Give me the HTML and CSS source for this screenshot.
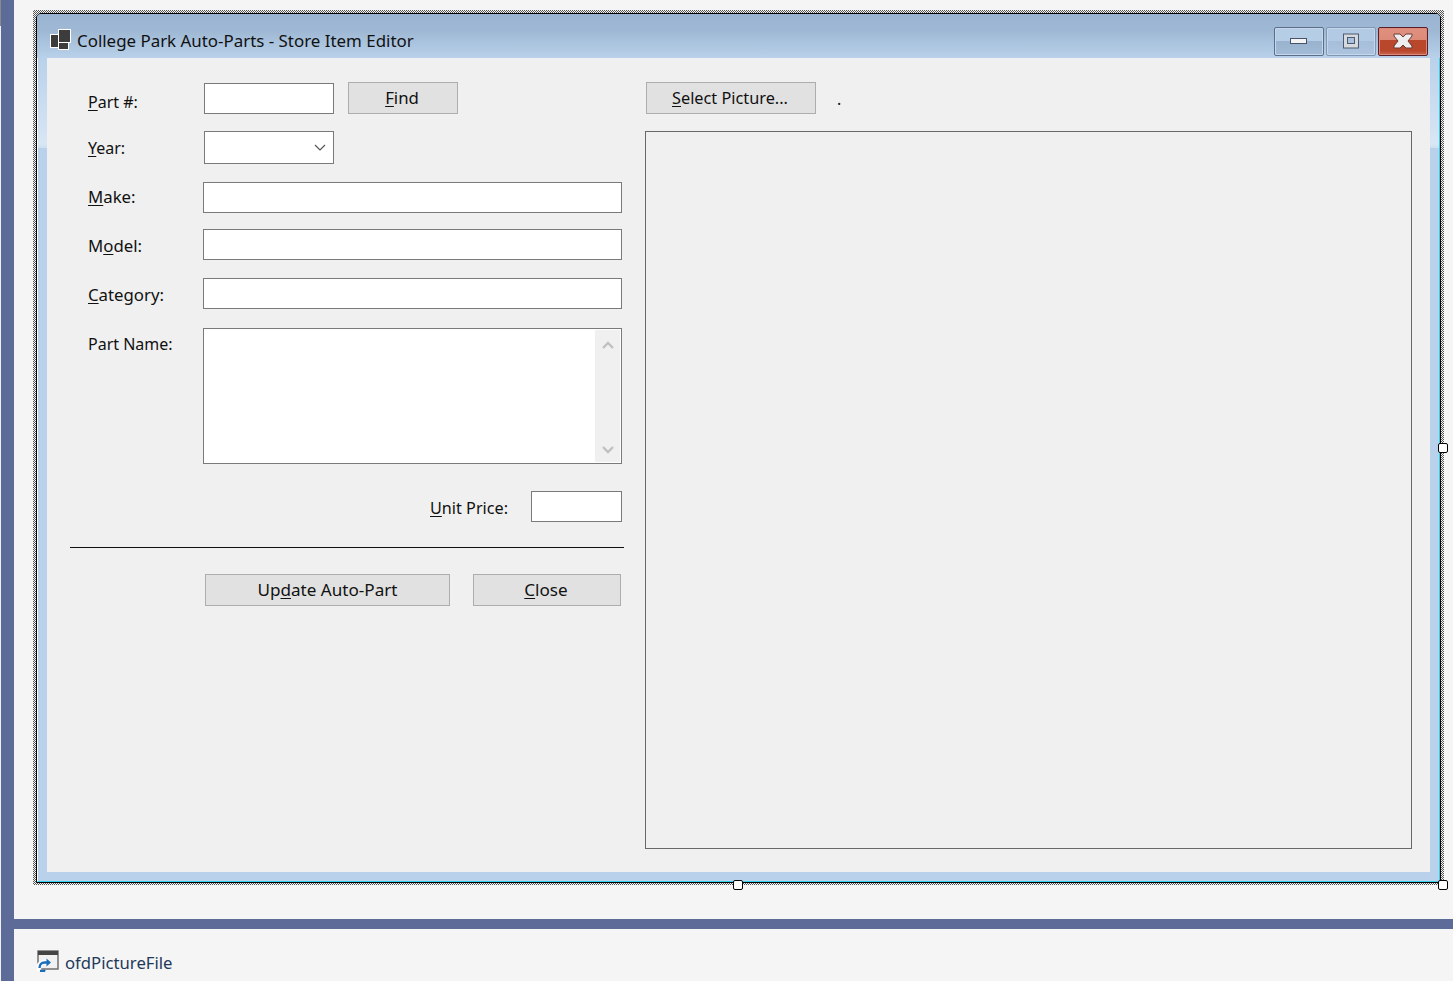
FILE: index.html
```html
<!DOCTYPE html>
<html lang="en">
<head>
<meta charset="utf-8">
<title>College Park Auto-Parts - Store Item Editor</title>
<link rel="stylesheet" href="styles.css">
</head>
<body>
<div class="page">
  <div class="rail"></div>
  <div class="main">
    <div class="surface">
      <div class="selection">
        <div class="window">
          <div class="titlebar">
            <svg class="app-icon" width="21" height="21" viewBox="0 0 21 21">
              <rect x="0.5" y="5.5" width="9" height="13" fill="#3c3c3c" stroke="#fff"/>
              <rect x="8.5" y="13.5" width="10" height="7" fill="#3c3c3c" stroke="#fff"/>
              <rect x="8.5" y="0.5" width="12" height="13" fill="#3c3c3c" stroke="#fff"/>
            </svg>
            <span class="title">College Park Auto-Parts - Store Item Editor</span>
            <div class="caption-buttons">
              <div class="cap cap-min">
                <svg width="18" height="8" viewBox="0 0 18 8"><rect x="0.5" y="1.5" width="16" height="5" fill="#f4f4f4" stroke="#46536b"/></svg>
              </div>
              <div class="cap cap-max">
                <svg width="18" height="16" viewBox="0 0 18 16"><rect x="1.5" y="1" width="15" height="14" fill="#d6d9de" stroke="#4c5a70"/><rect x="5.5" y="4.5" width="7" height="6" fill="#a9c1dc" stroke="#4c5a70"/></svg>
              </div>
              <div class="cap cap-close">
                <svg width="20" height="16" viewBox="0 0 20 16"><path d="M1 1h6l3 3 3-3h6v2l-4 5 4 5v2h-6l-3-3-3 3H1v-2l4-5-4-5z" fill="#eeeeee" stroke="#6a3a36"/></svg>
              </div>
            </div>
          </div>
          <div class="frame">
            <div class="client">
              <div class="left-col">
                <div class="row row-part">
                  <label class="lbl nudge-8"><u>P</u>art #:</label>
                  <div class="field field-short"></div>
                  <button class="btn btn-find"><u>F</u>ind</button>
                </div>
                <div class="row row-year">
                  <label class="lbl nudge-5"><u>Y</u>ear:</label>
                  <div class="combo">
                    <svg width="12" height="7" viewBox="0 0 12 7"><path d="M1 1l5 5 5-5" fill="none" stroke="#555" stroke-width="1.2"/></svg>
                  </div>
                </div>
                <div class="row row-make">
                  <label class="lbl lbl-lg nudge-3"><u>M</u>ake:</label>
                  <div class="field field-wide"></div>
                </div>
                <div class="row row-model">
                  <label class="lbl lbl-lg nudge-5">M<u>o</u>del:</label>
                  <div class="field field-wide"></div>
                </div>
                <div class="row row-category">
                  <label class="lbl lbl-lg nudge-5"><u>C</u>ategory:</label>
                  <div class="field field-wide"></div>
                </div>
                <div class="row row-name">
                  <label class="lbl nudge-4">Part Name:</label>
                  <div class="memo">
                    <div class="scrollbar">
                      <svg width="12" height="8" viewBox="0 0 12 8"><path d="M1 7l5-5 5 5" fill="none" stroke="#c0c0c0" stroke-width="2.4"/></svg>
                      <svg width="12" height="8" viewBox="0 0 12 8"><path d="M1 1l5 5 5-5" fill="none" stroke="#c0c0c0" stroke-width="2.4"/></svg>
                    </div>
                  </div>
                </div>
                <div class="row row-price">
                  <label class="lbl-price nudge-5"><u>U</u>nit Price:</label>
                  <div class="field field-price"></div>
                </div>
                <div class="separator"></div>
                <div class="row row-actions">
                  <button class="btn btn-update">Up<u>d</u>ate Auto-Part</button>
                  <button class="btn btn-close"><u>C</u>lose</button>
                </div>
              </div>
              <div class="right-col">
                <div class="picture-head">
                  <button class="btn btn-select"><u>S</u>elect Picture...</button>
                  <span class="dot">.</span>
                </div>
                <div class="picture"></div>
              </div>
            </div>
          </div>
        </div>
        <span class="handle handle-right"></span>
        <span class="handle handle-bottom"></span>
        <span class="handle handle-corner"></span>
      </div>
    </div>
    <div class="divider"></div>
    <div class="tray">
      <svg width="22" height="22" viewBox="0 0 22 22">
        <rect x="1" y="1" width="20" height="18" fill="#f1f1f1" stroke="#666" stroke-width="1.4"/>
        <rect x="1" y="1" width="20" height="4" fill="#444"/>
        <path d="M2 21c-1-5 1-9 6-9h3" fill="none" stroke="#fff" stroke-width="5"/>
        <path d="M3 21h4c1-1 1-1 1-1M2.500 18c0-3 2-5.500 5-5.500H10" fill="none" stroke="#1a6fbd" stroke-width="2.400"/>
        <path d="M9.500 8.500l4.500 4-4.500 4z" fill="#1a6fbd"/>
      </svg>
      <span class="tray-label">ofdPictureFile</span>
    </div>
  </div>
</div>
</body>
</html>
```
FILE: styles.css
```css
* { box-sizing: border-box; }
html, body { margin: 0; height: 100%; overflow: hidden; }
body { font-family: "Noto Sans", "Open Sans", "Liberation Sans", sans-serif; font-size: 16px; color: #111; background: #f5f5f5; }
u { text-underline-offset: 2px; text-decoration-thickness: 1px; }

.page { display: flex; height: 981px; }
.rail {
  width: 14px; flex: none;
  background:
    linear-gradient(#8a8a8a, #8a8a8a) 0 0 / 1px 26px no-repeat,
    linear-gradient(#eef0f4, #eef0f4) 0 0 / 1px 100% no-repeat,
    #5d6b99;
}
.main { flex: 1; min-width: 0; display: flex; flex-direction: column; }
.surface { height: 919px; padding: 10px 9px 0 19px; background: #f5f5f5; }
.divider { height: 10px; background: #5d6b99; }
.tray { flex: 1; display: flex; align-items: flex-start; gap: 6px; padding: 21px 0 0 23px; background: #f5f5f5; }
.tray-label { font-size: 16.7px; color: #1e395b; line-height: 24px; margin-top: 1px; }

.selection {
  position: relative; width: 1411px; height: 875px; padding: 3px;
  background: repeating-conic-gradient(#555 0 25%, #f5f5f5 0 50%) 0 0 / 2px 2px;
}
.window {
  height: 870px; display: flex; flex-direction: column;
  border: 1px solid #000; border-radius: 5px 5px 0 0;
  background: #b9d1ea;
  overflow: hidden;
}
.titlebar {
  height: 44px; flex: none; display: flex; align-items: center;
  padding: 0 12px 0 13px;
  background: linear-gradient(#99b4d1 0, #9fb9d5 40%, #b9d1ea 100%);
}
.app-icon { flex: none; margin-top: 6px; }
.title { margin-left: 6px; margin-top: 10px; font-size: 16.9px; line-height: 24px; color: #111; }
.caption-buttons { margin-left: auto; display: flex; gap: 2px; margin-top: 10px; }
.cap {
  width: 50px; height: 29px; display: flex; align-items: center; justify-content: center;
  border: 1px solid #5b6f8c; border-radius: 2px;
  background: linear-gradient(#b6cde6 0, #b6cde6 48%, #98b2cf 48%, #a3bbd6 100%);
  box-shadow: inset 0 0 0 1px #c6d7ea;
}
.cap-max { border-color: #7f97b6; background: linear-gradient(#b3cae4 0, #b3cae4 48%, #a6bed9 48%, #adc5df 100%); }
.cap-close {
  border-color: #5b1f2a; box-shadow: inset 0 0 0 1px #d98a79;
  background: linear-gradient(#e1907f 0, #dc8a78 46%, #b8472c 46%, #b8472c 85%, #cb6a52 100%);
}
.frame {
  flex: 1; min-height: 0; padding: 0 9px 9px;
  border-left: 1px solid #fff; border-right: 1px solid #35d0ea; border-bottom: 1px solid #35d0ea;
  background: linear-gradient(#b9d1ea 0, #d9e6f5 86px, #cfdef0 90px, #b9d1ea 90px);
}
.client { height: 100%; display: flex; gap: 21px; padding: 24px 0 0 23px; background: #f0f0f0; }

.left-col { width: 554px; flex: none; }
.row { display: flex; align-items: flex-start; padding-left: 18px; }
.lbl { width: 115px; flex: none; line-height: 24px; }
.lbl-lg { font-size: 16.8px; }
.lbl-price { line-height: 24px; margin-right: 23px; font-size: 16.2px; }
.nudge-3 { margin-top: 3px; }
.nudge-4 { margin-top: 4px; }
.nudge-5 { margin-top: 5px; }
.nudge-8 { margin-top: 8px; }

.row-year { margin-top: 17px; }
.row-make { margin-top: 18px; }
.row-model { margin-top: 16px; }
.row-category { margin-top: 18px; }
.row-name { margin-top: 19px; }
.row-price { margin-top: 27px; justify-content: flex-end; padding: 0 2px 0 0; }
.row-actions { margin-top: 26px; padding-left: 135px; gap: 23px; }

.field { height: 31px; background: #fff; border: 1px solid #7a7a7a; }
.field-short { width: 130px; margin: 1px 0 0 1px; }
.field-wide { width: 419px; }
.field-price { width: 91px; }
.combo {
  width: 130px; height: 33px; margin-left: 1px; background: #fff; border: 1px solid #7a7a7a;
  display: flex; align-items: center; justify-content: flex-end; padding: 0 7px 0 0;
}
.memo {
  width: 419px; height: 136px; background: #fff; border: 1px solid #7a7a7a;
  display: flex; justify-content: flex-end; padding: 1px;
}
.scrollbar {
  width: 25px; background: #f0f0f0; display: flex; flex-direction: column;
  align-items: center; justify-content: space-between; padding: 11px 0 8px;
}

.btn {
  height: 32px; padding: 0; background: #e1e1e1; border: 1px solid #adadad;
  font: inherit; font-size: 16.8px; color: #111; line-height: 24px; display: block;
}
.btn-find { width: 110px; margin-left: 14px; padding-right: 2px; }
.btn-update { width: 245px; font-size: 17.1px; }
.btn-close { width: 148px; font-size: 17.1px; padding-right: 2px; }
.btn-select { width: 170px; margin-left: 1px; font-size: 16.3px; padding-right: 2px; }

.separator { height: 1px; margin-top: 25px; background: #111; }

.right-col { width: 767px; flex: none; }
.picture-head { display: flex; align-items: flex-start; height: 49px; }
.dot { margin: 5px 0 0 21px; line-height: 24px; }
.picture { height: 718px; border: 1px solid #696969; }

.handle {
  position: absolute; width: 10px; height: 10px; background: #fff;
  border: 1px solid #000; border-radius: 2px;
}
.handle-right { left: 1405px; top: 433px; }
.handle-bottom { left: 700px; top: 870px; }
.handle-corner { left: 1405px; top: 870px; }
```
